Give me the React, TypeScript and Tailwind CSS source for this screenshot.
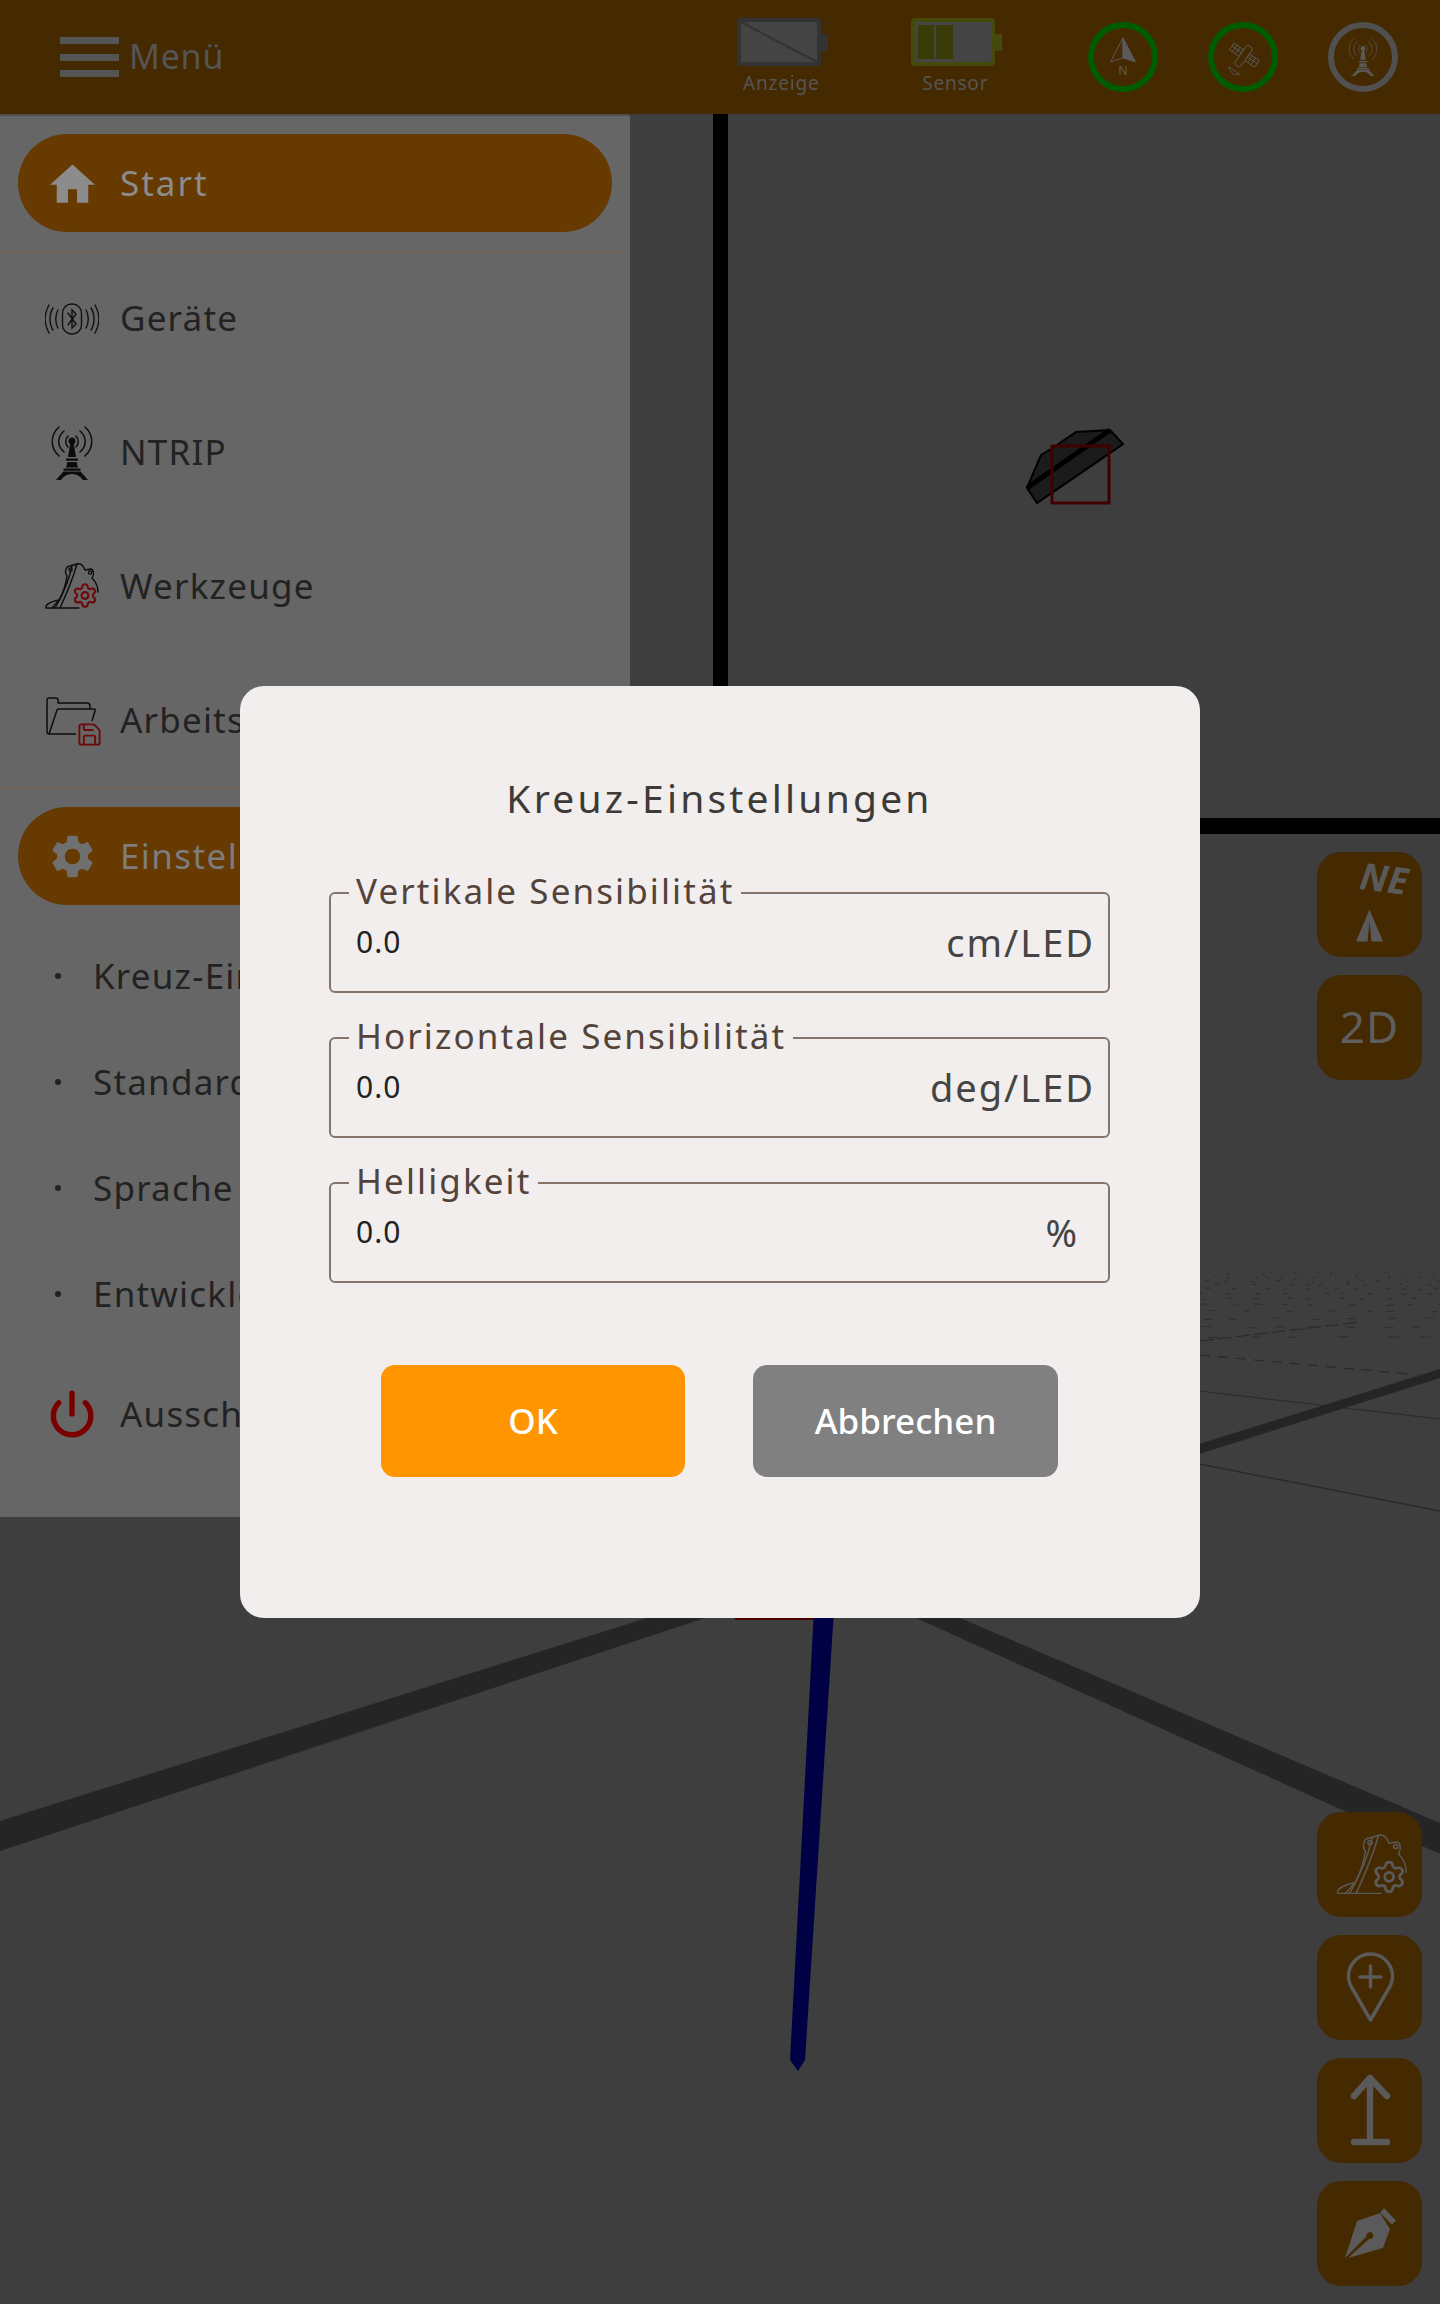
import React from "react";
import { Settings, Save, Power } from "lucide-react";

const font = "font-['Noto_Sans',sans-serif]";

function Bucket({ color, gear, sw = 1.4, className }: { color: string; gear: string; sw?: number; className?: string }) {
  return (
    <svg viewBox="0 0 54 47" className={className} fill="none" stroke={color} strokeWidth={sw} strokeLinejoin="round" strokeLinecap="round">
      <path d="M1 44.5C0 41 8 38 14 37C18 30 21 20 22 13C19 9 21 3 25 3L32 1C35 0 38 2 40 7L46 6C49 7 49 12 47 15C51 19 53 24 53 29" />
      <path d="M1 45H34" />
      <path d="M32 1C28 15 21 32 15 45" />
      <path d="M27 3C24 17 17 33 10 45" />
      <circle cx="25.5" cy="6.5" r="1.6" />
      <circle cx="45" cy="9.5" r="1.6" />
      <path d="M14 37L7 45" />
      <Settings x={26.5} y={19} width={27} height={27} color={gear} strokeWidth={1.9} />
    </svg>
  );
}

function Tower({ color, className, sw = 1.2 }: { color: string; className?: string; sw?: number }) {
  return (
    <svg viewBox="0 0 42 54" className={className} fill="none" stroke={color} strokeWidth={sw} strokeLinecap="round">
      <path d="M8 30C-1 22 -1 9 8 1M13 26C6 20 6 11 13 5M17 21C14 18 14 13 17 10" />
      <path d="M34 30C43 22 43 9 34 1M29 26C36 20 36 11 29 5M25 21C28 18 28 13 25 10" />
      <circle cx="21" cy="15" r="3.500" fill={color} stroke="none" />
      <g fill={color} stroke="none">
        <path d="M19.500 16H22.500L25 31H17Z" />
        <rect x="15" y="32.500" width="12" height="2.200" />
        <path d="M16.500 36H25.500L27 41.500H15Z" />
        <rect x="12.500" y="42.500" width="17" height="2.200" />
        <path d="M12.500 45.500H29.500L37 54H32C30 51 26 48 21 48C16 48 12 51 10 54H5Z" />
      </g>
    </svg>
  );
}

function Ring({ color, children }: { color: string; children: React.ReactNode }) {
  return (
    <div className="w-[70px] h-[70px] rounded-full border-[6px] flex items-center justify-center" style={{ borderColor: color }}>
      {children}
    </div>
  );
}

function Battery({ label, frame, nub, children }: { label: string; frame: string; nub: string; children: React.ReactNode }) {
  return (
    <div className="flex flex-col items-center w-[92px]">
      <div className="flex items-center self-start">
        <div className="relative w-[84px] h-[48px] rounded-[4px] border-[4px] bg-[#444444] overflow-hidden" style={{ borderColor: frame }}>
          {children}
        </div>
        <div className="w-[7px] h-[17px]" style={{ backgroundColor: nub }} />
      </div>
      <div className="mt-[4px] -ml-[4px] text-[19px] leading-[26px] text-[#555555] tracking-[0.8px]">{label}</div>
    </div>
  );
}

function Pill({ icon, label, text }: { icon: React.ReactNode; label: string; text: string }) {
  return (
    <div className="mx-[18px] h-[98px] rounded-[49px] bg-[#663a00] flex items-center">
      <div className="w-[102px] pl-[6px] flex justify-center">{icon}</div>
      <span className={`text-[35px] tracking-[1.4px] ${text}`}>{label}</span>
    </div>
  );
}

function Row({ icon, label, lift }: { icon: React.ReactNode; label: string; lift?: boolean }) {
  return (
    <div className={`h-[134px] flex items-center ${lift ? "pb-[3px]" : ""}`}>
      <div className="w-[120px] pl-[24px] flex justify-center shrink-0">{icon}</div>
      <span className="text-[35px] tracking-[1.2px] text-[#222222] whitespace-nowrap">{label}</span>
    </div>
  );
}

function Sub({ label }: { label: string }) {
  return (
    <div className="h-[106px] flex items-center pl-[55px]">
      <div className="w-[6px] h-[6px] rounded-full bg-[#222222] mr-[32px]" />
      <span className="text-[35px] tracking-[1.2px] text-[#222222] whitespace-nowrap">{label}</span>
    </div>
  );
}

function Field({ label, unit, pr }: { label: string; unit: string; pr: string }) {
  return (
    <div className="relative h-[101px] border-2 border-[#85756a] rounded-[6px] flex items-center pl-[25px]">
      <span className="absolute left-[18px] -top-[25px] bg-[#f1eeed] px-[7px] text-[35px] leading-[44px] tracking-[2.1px] text-[#53433a]">{label}</span>
      <span className="-mt-[2px] text-[30px] text-[#222222] tracking-[1px]">0.0</span>
      <span className={`ml-auto text-[38px] tracking-[2px] text-[#444444] ${pr}`}>{unit}</span>
    </div>
  );
}

function SideButton({ children }: { children: React.ReactNode }) {
  return <div className="w-[105px] h-[105px] rounded-[24px] bg-[#452900] flex items-center justify-center">{children}</div>;
}

const dashes: { x: number; y: number; l: number }[] = [];
let seed = 17;
const rnd = () => {
  seed = (seed * 16807) % 2147483647;
  return seed / 2147483647;
};
{
  let y = 1272;
  let gap = 2.5;
  while (y < 1345) {
    const p = (y - 1272) / 73;
    let x = 1195 + rnd() * 20;
    while (x < 1440) {
      dashes.push({ x, y: y + rnd() * 1.500, l: 2 + p * 10 });
      x += 10 + p * 18 + rnd() * 26;
    }
    y += gap;
    gap *= 1.13;
  }
}

function Scene() {
  return (
    <svg className="absolute inset-0 w-[1440px] h-[2304px]" viewBox="0 0 1440 2304">
      <rect x="713" y="114" width="15" height="720" fill="#000000" />
      <rect x="713" y="818" width="727" height="16" fill="#000000" />
      <polygon points="1041,455 1051,449 1076,432 1110,430 1123,444 1037,503 1027,488" fill="#1b1b1b" stroke="#000000" strokeWidth="2" />
      <path d="M1027 488L1110 430" stroke="#000000" strokeWidth="5" />
      <rect x="1052" y="446" width="57" height="57" fill="none" stroke="#400000" strokeWidth="3" />
      {dashes.map((d, i) => (
        <path key={i} d={`M${d.x} ${d.y}h${d.l}`} stroke="#2e2e2e" strokeWidth="1" />
      ))}
      <path d="M1200 1355L1420 1375" stroke="#2a2a2a" strokeWidth="1.200" strokeDasharray="10 8" />
      <path d="M1200 1341L1360 1322" stroke="#2a2a2a" strokeWidth="1.200" strokeDasharray="14 4" />
      <path d="M1199 1391L1440 1419" stroke="#2a2a2a" strokeWidth="1.200" />
      <path d="M1199 1464L1440 1511" stroke="#2a2a2a" strokeWidth="1.500" />
      <polygon points="1199,1444 1440,1369 1440,1378 1199,1454" fill="#252525" />
      <polygon points="0,1821 647,1618 705,1618 0,1851" fill="#252525" />
      <polygon points="916,1618 960,1618 1440,1823 1440,1854" fill="#252525" />
      <rect x="735" y="1610" width="80" height="10" fill="#4d0000" />
      <polygon points="814,1610 834,1610 805,2060 798,2071 790,2060" fill="#000045" />
    </svg>
  );
}

export default function App() {
  return (
    <div className={`relative w-[1440px] h-[2304px] overflow-hidden bg-[#3e3e3e] ${font}`}>
      <Scene />

      <div className="relative">
        <header className="h-[114px] bg-[#452900] flex items-start">
          <div className="ml-[60px] mt-[37px] w-[59px] h-[40px] flex flex-col justify-between">
            <div className="h-[7px] bg-[#555555]" />
            <div className="h-[7px] bg-[#555555]" />
            <div className="h-[7px] bg-[#555555]" />
          </div>
          <span className="ml-[10px] mt-[32px] text-[34px] leading-[48px] text-[#555555] tracking-[0.8px]">Menü</span>

          <div className="ml-[513px] mt-[18px] flex gap-[82px]">
            <Battery label="Anzeige" frame="#333333" nub="#333333">
              <svg className="absolute inset-0 w-full h-full" viewBox="0 0 76 40" preserveAspectRatio="none">
                <path d="M0 0L76 40" stroke="#333333" strokeWidth="2" />
              </svg>
            </Battery>
            <Battery label="Sensor" frame="#45490c" nub="#45490c">
              <div className="absolute left-[3px] top-[3px] bottom-[3px] flex gap-[2px]">
                <div className="w-[16px] bg-[#3a3c07]" />
                <div className="w-[17px] bg-[#3a3c07]" />
              </div>
            </Battery>
          </div>

          <div className="ml-[85px] mt-[22px] flex gap-[50px]">
            <Ring color="#005c00">
              <svg viewBox="0 0 28 46" className="w-[28px] h-[44px] overflow-visible" fill="none" stroke="#5a5a5a" strokeWidth="1">
                <polygon points="14,3 1,28 14,24" fill="none" />
                <polygon points="14,3 27,28 14,24" fill="#5a5a5a" />
                <text x="14" y="42" fontSize="13" textAnchor="middle" fill="#5a5a5a" stroke="none">N</text>
              </svg>
            </Ring>
            <Ring color="#005c00">
              <svg viewBox="0 0 40 46" className="w-[36px] h-[42px]" fill="none" stroke="#5a5a5a" strokeWidth="1">
                <g transform="rotate(35 20 23)">
                  <rect x="16" y="9" width="8" height="26" rx="3" />
                  <rect x="3" y="16" width="13" height="9" />
                  <path d="M7 16v9M11 16v9M3 20h13" />
                  <rect x="24" y="16" width="13" height="9" />
                  <path d="M28 16v9M32 16v9M24 20h13" />
                </g>
                <path d="M4 34C6 42 12 44 16 42Z" />
              </svg>
            </Ring>
            <Ring color="#505050">
              <Tower color="#5a5a5a" sw={1} className="w-[30px] h-[38px]" />
            </Ring>
          </div>
        </header>

        <aside className="w-[630px] h-[1403px] bg-[#666666] border-t-2 border-[#4f4c4a]">
          <div className="pt-[18px] pb-[19px] border-b-2 border-[#6f625a]">
            <Pill
              text="text-[#8c8c8c] tracking-[2px]"
              label="Start"
              icon={
                <svg viewBox="2 3 20 17" className="w-[45px] h-[39px]" fill="#8c8c8c">
                  <path d="M10 20v-6h4v6h5v-8h3L12 3 2 12h3v8z" />
                </svg>
              }
            />
          </div>
          <div className="border-b-2 border-[#6f625a] h-[536px]">
            <Row
              lift
              label="Geräte"
              icon={
                <svg viewBox="0 0 54 32" className="w-[54px] h-[32px]" fill="none" stroke="#111111" strokeWidth="1.400" strokeLinecap="round">
                  <rect x="17.500" y="1" width="19" height="30" rx="9" />
                  <path d="M23 10L31 21L27 25V7L31 11L23 22" />
                  <path d="M13 7C10 12 10 20 13 25M8 5C4 11 4 21 8 27M4 2C-1 11 -1 21 4 30" />
                  <path d="M41 7C44 12 44 20 41 25M46 5C50 11 50 21 46 27M50 2C55 11 55 21 50 30" />
                </svg>
              }
            />
            <Row lift label="NTRIP" icon={<Tower color="#0c0c0c" className="w-[42px] h-[54px]" sw={1.500} />} />
            <Row lift label="Werkzeuge" icon={<Bucket color="#0c0c0c" gear="#6e0a0a" className="w-[54px] h-[47px]" />} />
            <Row
              lift
              label="Arbeitsbereich"
              icon={
                <div className="relative w-[53px] h-[47px]">
                  <svg viewBox="0 0 53 47" className="absolute inset-0 w-[53px] h-[47px]" fill="none" stroke="#0c0c0c" strokeWidth="1.500" strokeLinejoin="round">
                    <path d="M3 37C1.500 37 1 36 1 35V3C1 1.500 2 1 3 1H10C11 1 12 2 12 3V6H41C43 6 44 7 44 9V12" />
                    <path d="M3 37L11 13C11.500 12 12 12 13 12H48C49 12 49.500 13 49 14L46 24" />
                    <path d="M3 37H30" />
                  </svg>
                  <Save className="absolute right-[-4px] bottom-[-4px] w-[27px] h-[27px] text-[#6e0a0a]" strokeWidth={1.700} />
                </div>
              }
            />
          </div>
          <div className="pt-[18px]">
            <Pill
              text="text-[#7d7d7d]"
              label="Einstellungen"
              icon={
                <svg viewBox="2.500 2 19 20" className="w-[41px] h-[43px]" fill="#707070">
                  <path d="M19.140 12.940c.040-.300.060-.610.060-.940 0-.320-.020-.640-.070-.940l2.030-1.580c.180-.140.230-.410.120-.610l-1.920-3.320c-.120-.220-.370-.290-.590-.220l-2.390.960c-.500-.380-1.030-.700-1.620-.940l-.360-2.540c-.040-.240-.240-.410-.480-.410h-3.840c-.240 0-.430.170-.470.410l-.360 2.540c-.590.240-1.130.570-1.620.940l-2.390-.960c-.220-.080-.470 0-.590.220L2.740 8.870c-.120.210-.080.470.120.610l2.030 1.580c-.050.300-.090.630-.090.940s.020.640.070.940l-2.030 1.580c-.180.140-.230.410-.120.610l1.920 3.320c.120.220.370.290.590.220l2.390-.960c.500.380 1.030.700 1.620.940l.360 2.540c.050.240.240.410.480.410h3.840c.240 0 .440-.170.470-.410l.360-2.540c.590-.240 1.130-.560 1.620-.940l2.390.960c.220.080.470 0 .590-.220l1.920-3.320c.120-.220.070-.470-.120-.610l-2.010-1.580zM12 15.600c-1.980 0-3.600-1.620-3.600-3.600s1.620-3.600 3.600-3.600 3.600 1.620 3.600 3.600-1.620 3.600-3.600 3.600z" />
                </svg>
              }
            />
            <div className="mt-[18px]">
              <Sub label="Kreuz-Einstellungen" />
              <Sub label="Standard" />
              <Sub label="Sprache" />
              <Sub label="Entwickler" />
            </div>
            <Row label="Ausschalten" icon={<Power className="w-[50px] h-[50px] text-[#7a0000]" strokeWidth={2.600} />} />
          </div>
        </aside>
      </div>

      <div className="absolute right-[18px] top-[852px] flex flex-col gap-[18px]">
        <SideButton>
          <div className="relative w-full h-full">
            <span className="absolute left-[43px] top-[3px] text-[37px] leading-[46px] font-bold italic text-[#5a5a5a] rotate-[7deg]">NE</span>
            <svg viewBox="0 0 28 33" className="absolute left-[39px] top-[57px] w-[27px] h-[33px]" fill="#5a5a5a">
              <path d="M14 0L28 33H16L14 12L12 33H0Z" />
            </svg>
          </div>
        </SideButton>
        <SideButton>
          <span className="-mt-[3px] text-[44px] text-[#5e5e5e] tracking-[1px]">2D</span>
        </SideButton>
      </div>

      <div className="absolute right-[18px] top-[1812px] flex flex-col gap-[18px]">
        <SideButton>
          <Bucket color="#5a5a5a" gear="#5a5a5a" sw={1.100} className="w-[72px] h-[62px] ml-[4px]" />
        </SideButton>
        <SideButton>
          <svg viewBox="0 0 105 105" className="w-[105px] h-[105px]" fill="none" stroke="#5a5a5a" strokeWidth="3.500" strokeLinecap="round" strokeLinejoin="round">
            <path d="M53.500 85L35 53A22 22 0 1 1 72 53Z" />
            <path d="M53.500 31V52M43 42H64" />
          </svg>
        </SideButton>
        <SideButton>
          <svg viewBox="0 0 105 105" className="w-[105px] h-[105px]" fill="none" stroke="#5a5a5a" strokeWidth="6.500" strokeLinecap="round" strokeLinejoin="round">
            <path d="M53 20V84M37 38L53 20L70 38M37 84H70" />
          </svg>
        </SideButton>
        <SideButton>
          <svg viewBox="0 0 105 105" className="w-[105px] h-[105px]" fill="#5a5a5a">
            <path fillRule="evenodd" d="M28 77L40 40L63 32L73 48L66 67L31 77L52 58A3.500 3.500 0 1 0 49.500 55.500Z" />
            <path d="M67 27L79 39.500L75 43.500L63 31.700Z" />
          </svg>
        </SideButton>
      </div>

      <div className="absolute inset-0 flex items-center justify-center">
        <div className="w-[960px] h-[932px] rounded-[24px] bg-[#f1eeed] pl-[89px] pr-[90px] pt-[84px]">
          <h2 className="text-center text-[39px] leading-[56px] font-normal text-[#3d3a38] tracking-[3.2px]">Kreuz-Einstellungen</h2>
          <div className="mt-[66px] flex flex-col gap-[44px]">
            <Field label="Vertikale Sensibilität" unit="cm/LED" pr="pr-[13px]" />
            <Field label="Horizontale Sensibilität" unit="deg/LED" pr="pr-[13px]" />
            <Field label="Helligkeit" unit="%" pr="pr-[29px]" />
          </div>
          <div className="mt-[82px] flex justify-center gap-[68px]">
            <div className="w-[304px] h-[112px] rounded-[14px] bg-[#ff9500] flex items-center justify-center text-[35px] font-medium text-white">OK</div>
            <div className="w-[305px] h-[112px] rounded-[14px] bg-[#808080] flex items-center justify-center text-[35px] font-medium text-white">Abbrechen</div>
          </div>
        </div>
      </div>
    </div>
  );
}
